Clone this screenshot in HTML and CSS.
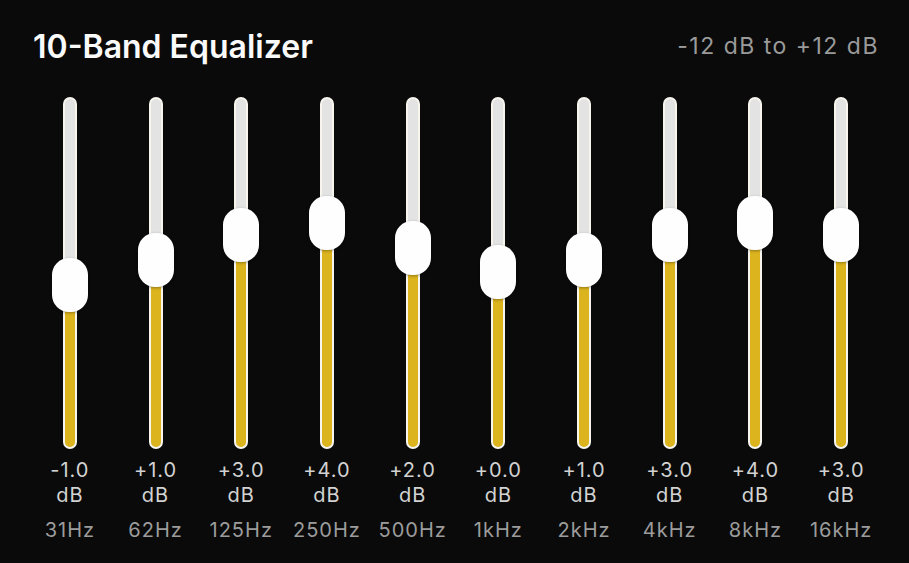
FILE: index.html
```html
<!DOCTYPE html>
<html>
<head>
<meta charset="utf-8">
<link rel="stylesheet" href="styles.css">
</head>
<body>
<div class="panel">
  <header class="head">
    <h1 class="title">10-Band Equalizer</h1>
    <span class="range">-12 dB to +12 dB</span>
  </header>
  <div class="bands">
    <div class="band">
      <div class="slider"><div class="track"><div class="fill" style="height:164px"></div></div><div class="knob" style="top:161px"></div></div>
      <div class="val">-1.0<br>dB</div><div class="freq">31Hz</div>
    </div>
    <div class="band">
      <div class="slider"><div class="track"><div class="fill" style="height:189px"></div></div><div class="knob" style="top:136px"></div></div>
      <div class="val">+1.0<br>dB</div><div class="freq">62Hz</div>
    </div>
    <div class="band">
      <div class="slider"><div class="track"><div class="fill" style="height:213px"></div></div><div class="knob" style="top:111px"></div></div>
      <div class="val">+3.0<br>dB</div><div class="freq">125Hz</div>
    </div>
    <div class="band">
      <div class="slider"><div class="track"><div class="fill" style="height:226px"></div></div><div class="knob" style="top:99px"></div></div>
      <div class="val">+4.0<br>dB</div><div class="freq">250Hz</div>
    </div>
    <div class="band">
      <div class="slider"><div class="track"><div class="fill" style="height:201px"></div></div><div class="knob" style="top:124px"></div></div>
      <div class="val">+2.0<br>dB</div><div class="freq">500Hz</div>
    </div>
    <div class="band">
      <div class="slider"><div class="track"><div class="fill" style="height:176px"></div></div><div class="knob" style="top:148px"></div></div>
      <div class="val">+0.0<br>dB</div><div class="freq">1kHz</div>
    </div>
    <div class="band">
      <div class="slider"><div class="track"><div class="fill" style="height:189px"></div></div><div class="knob" style="top:136px"></div></div>
      <div class="val">+1.0<br>dB</div><div class="freq">2kHz</div>
    </div>
    <div class="band">
      <div class="slider"><div class="track"><div class="fill" style="height:213px"></div></div><div class="knob" style="top:111px"></div></div>
      <div class="val">+3.0<br>dB</div><div class="freq">4kHz</div>
    </div>
    <div class="band">
      <div class="slider"><div class="track"><div class="fill" style="height:226px"></div></div><div class="knob" style="top:99px"></div></div>
      <div class="val">+4.0<br>dB</div><div class="freq">8kHz</div>
    </div>
    <div class="band">
      <div class="slider"><div class="track"><div class="fill" style="height:213px"></div></div><div class="knob" style="top:111px"></div></div>
      <div class="val">+3.0<br>dB</div><div class="freq">16kHz</div>
    </div>
  </div>
</div>
</body>
</html>
```
FILE: styles.css
```css
html, body {
  margin: 0;
  padding: 0;
  background: #0a0a0a;
  width: 909px;
  height: 563px;
  overflow: hidden;
  font-family: Inter, "Open Sans", "Liberation Sans", sans-serif;
}
.panel {
  padding: 28px 30px 0 33px;
}
.head {
  display: flex;
  justify-content: space-between;
  align-items: center;
  height: 36px;
}
.title {
  margin: 0;
  font-size: 32px;
  font-weight: 600;
  color: #fafafa;
  letter-spacing: 0;
}
.range {
  font-size: 23px;
  letter-spacing: 1.5px;
  color: #9a9a9a;
}
.bands {
  display: grid;
  grid-template-columns: repeat(10, 1fr);
  margin: 33px -5px 0 -6px;
}
.band {
  display: flex;
  flex-direction: column;
  align-items: center;
}
.slider {
  position: relative;
  width: 40px;
  height: 352px;
  display: flex;
  justify-content: center;
}
.track {
  position: relative;
  width: 10px;
  height: 348px;
  border: 2px solid #f7f5ee;
  border-radius: 8px;
  background: #e3e3e3;
  overflow: hidden;
}
.fill {
  position: absolute;
  left: 0;
  right: 0;
  bottom: 0;
  background: #dcb41e;
}
.knob {
  position: absolute;
  left: 2px;
  width: 36px;
  height: 54px;
  border-radius: 17px;
  background: #fefefe;
  box-shadow: 0 1px 3px rgba(0,0,0,0.35);
}
.val {
  margin-top: 9px;
  font-size: 20px;
  letter-spacing: 1px;
  line-height: 25px;
  text-align: center;
  color: #d2d2d2;
}
.freq {
  margin-top: 10px;
  font-size: 20px;
  letter-spacing: 1px;
  line-height: 25px;
  color: #9c9c9c;
}
```
